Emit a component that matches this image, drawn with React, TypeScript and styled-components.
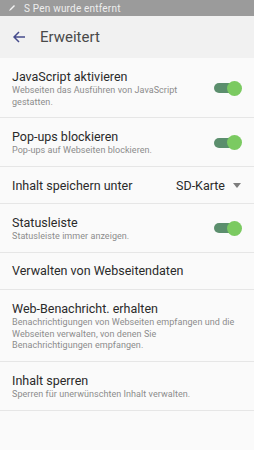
import styled, { createGlobalStyle } from "styled-components";

const GlobalStyle = createGlobalStyle`
  * { box-sizing: border-box; }
  body {
    margin: 0;
    background: #fafafa;
    font-family: Roboto, "Noto Sans", sans-serif;
  }
`;

type Item = {
  title: string;
  sub?: string;
  control?: "toggle" | "select";
};

const items: Item[] = [
  {
    title: "JavaScript aktivieren",
    sub: "Webseiten das Ausführen von JavaScript gestatten.",
    control: "toggle",
  },
  {
    title: "Pop-ups blockieren",
    sub: "Pop-ups auf Webseiten blockieren.",
    control: "toggle",
  },
  { title: "Inhalt speichern unter", control: "select" },
  {
    title: "Statusleiste",
    sub: "Statusleiste immer anzeigen.",
    control: "toggle",
  },
  { title: "Verwalten von Webseitendaten" },
  {
    title: "Web-Benachricht. erhalten",
    sub: "Benachrichtigungen von Webseiten empfangen und die Webseiten verwalten, von denen Sie Benachrichtigungen empfangen.",
  },
  {
    title: "Inhalt sperren",
    sub: "Sperren für unerwünschten Inhalt verwalten.",
  },
];

export default function App() {
  return (
    <Screen>
      <GlobalStyle />
      <StatusBar>
        <svg width="8" height="8" viewBox="0 0 8 8">
          <path d="M1 7 L2 5 L6 1 L7 2 L3 6 Z" fill="#f4f4f4" />
        </svg>
        <span>S Pen wurde entfernt</span>
      </StatusBar>

      <Header>
        <svg width="13" height="12" viewBox="0 0 13 12">
          <path
            d="M12 6 H1.5 M6 1 L1 6 L6 11"
            stroke="#454b8c"
            strokeWidth="1.5"
            fill="none"
          />
        </svg>
        <HeaderTitle>Erweitert</HeaderTitle>
      </Header>

      <List>
        {items.map((item) => (
          <Row key={item.title} $single={!item.sub}>
            <TextBlock>
              <Title>{item.title}</Title>
              {item.sub && <Sub>{item.sub}</Sub>}
            </TextBlock>
            {item.control === "toggle" && (
              <Toggle>
                <Thumb />
              </Toggle>
            )}
            {item.control === "select" && (
              <Select>
                SD-Karte
                <Caret />
              </Select>
            )}
          </Row>
        ))}
      </List>
    </Screen>
  );
}

const Screen = styled.div`
  width: 254px;
  height: 450px;
  background: #fafafa;
  overflow: hidden;
`;

const StatusBar = styled.div`
  height: 16px;
  background: #9b9b9b;
  display: flex;
  align-items: center;
  gap: 8px;
  padding-left: 8px;

  span {
    color: #eeeeee;
    font-size: 10px;
    letter-spacing: 0.2px;
  }
`;

const Header = styled.div`
  height: 42px;
  background: #f1f1f1;
  display: flex;
  align-items: center;
  gap: 14px;
  padding-left: 13px;
`;

const HeaderTitle = styled.span`
  font-size: 15px;
  color: #4a4a4a;
`;

const List = styled.div`
  display: flex;
  flex-direction: column;
`;

const Row = styled.div<{ $single: boolean }>`
  display: flex;
  align-items: center;
  gap: 10px;
  min-height: ${(p) => (p.$single ? "37px" : "0")};
  padding: ${(p) => (p.$single ? "0 13px 0 12px" : "10px 13px 9px 12px")};
  border-bottom: 1px solid #e6e6e6;
`;

const TextBlock = styled.div`
  flex: 1;
  display: flex;
  flex-direction: column;
`;

const Title = styled.div`
  font-size: 12.5px;
  line-height: 17px;
  color: #2a2a2a;
`;

const Sub = styled.div`
  max-width: 224px;
  font-size: 9px;
  line-height: 11.7px;
  color: #8c8c8c;
  letter-spacing: 0.05px;
`;

const Toggle = styled.div`
  position: relative;
  width: 23px;
  height: 10px;
  border-radius: 5px;
  background: #5b8e6d;
  margin-right: 4px;
  flex-shrink: 0;
`;

const Thumb = styled.div`
  position: absolute;
  right: -5px;
  top: 50%;
  width: 15px;
  height: 15px;
  margin-top: -7.5px;
  border-radius: 50%;
  background: #7bca61;
`;

const Select = styled.div`
  display: flex;
  align-items: center;
  gap: 8px;
  font-size: 12.5px;
  color: #2a2a2a;
`;

const Caret = styled.span`
  width: 0;
  height: 0;
  border-left: 4px solid transparent;
  border-right: 4px solid transparent;
  border-top: 5px solid #7d7d7d;
`;
